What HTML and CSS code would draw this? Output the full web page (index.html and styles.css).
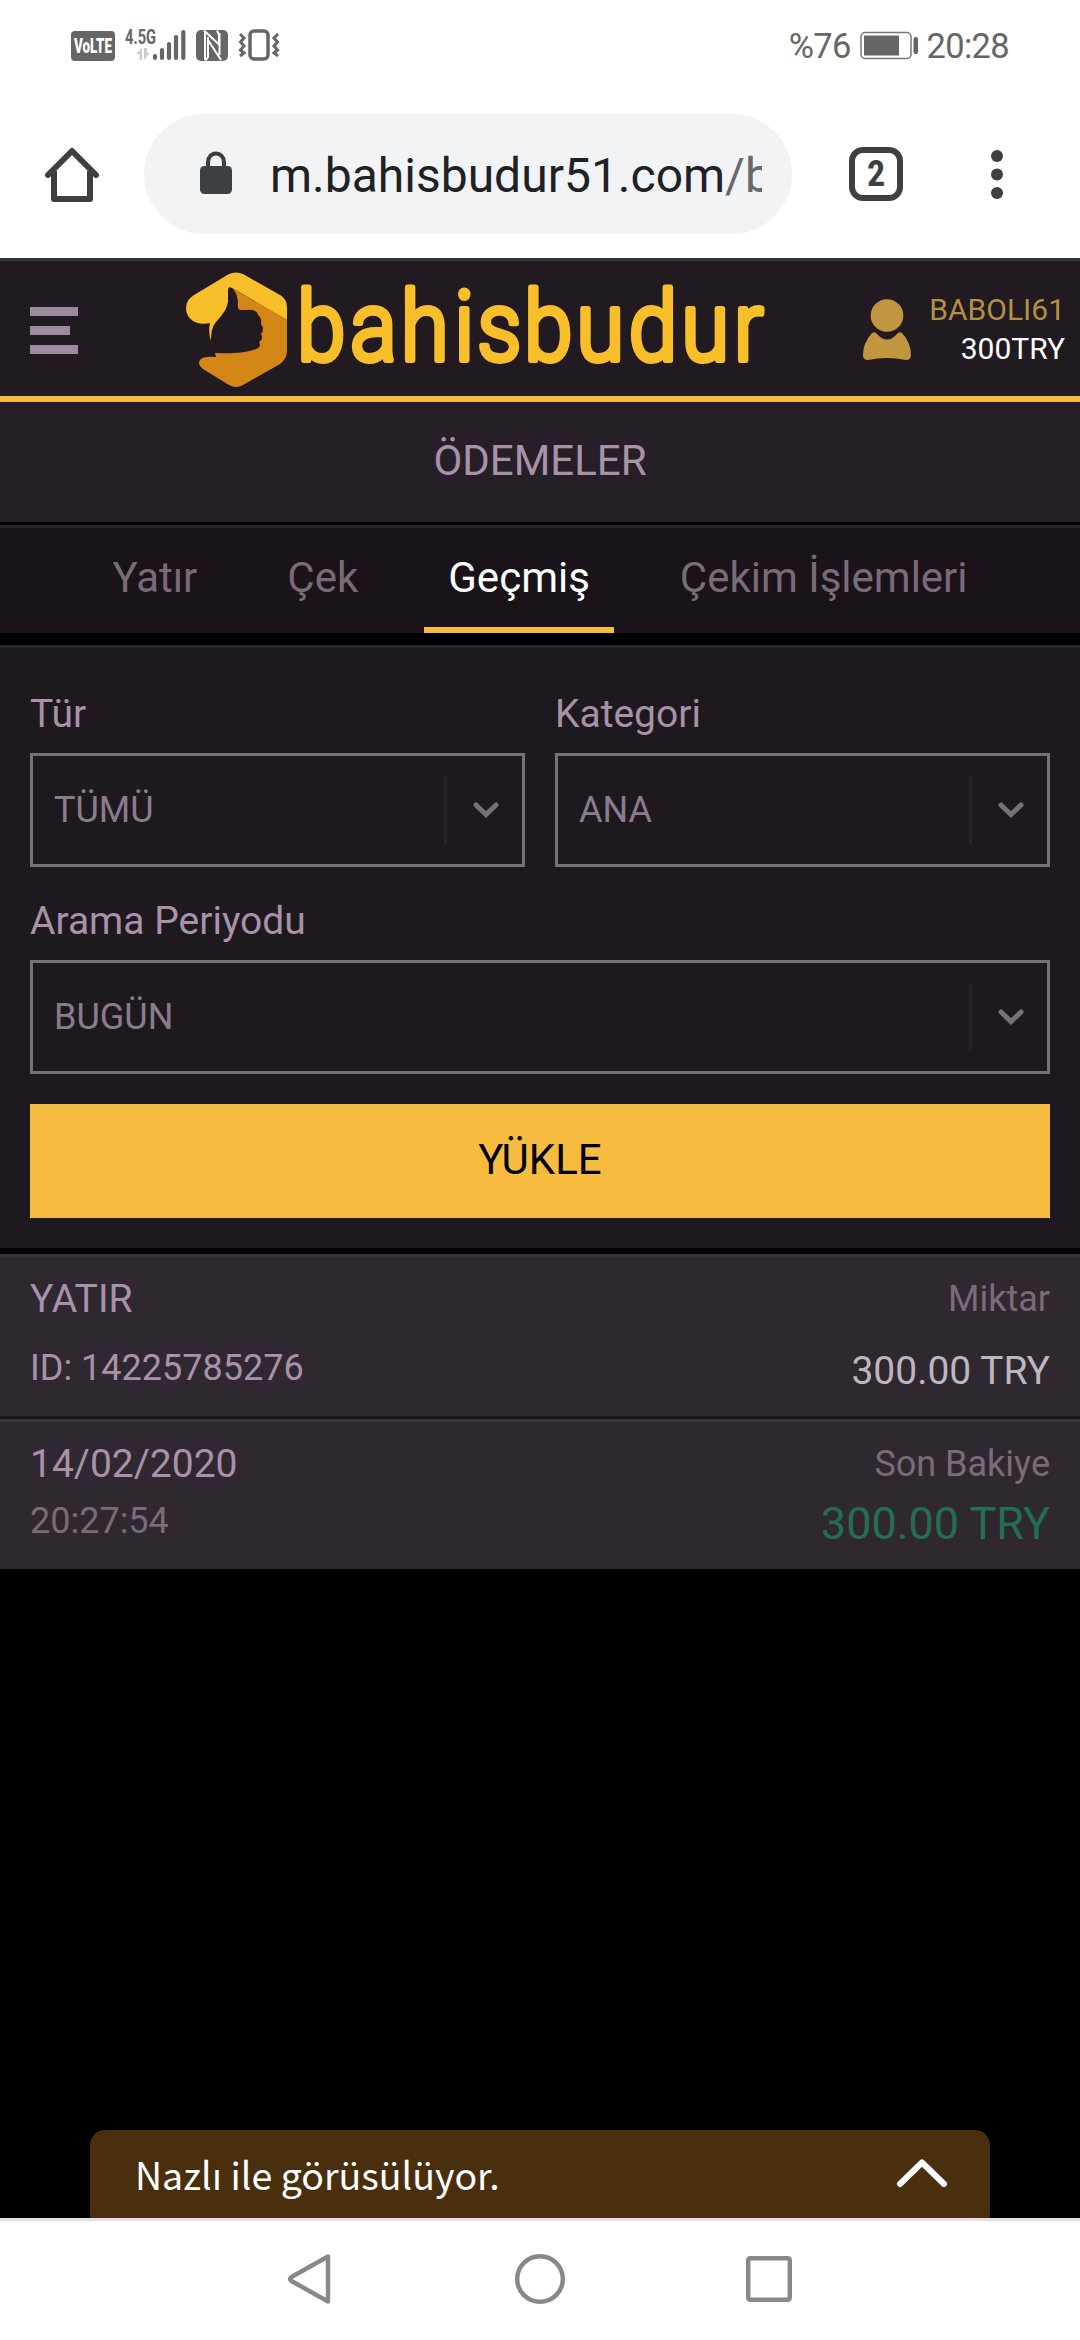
FILE: index.html
```html
<!DOCTYPE html>
<html lang="tr">
<head>
<meta charset="utf-8">
<title>Ödemeler</title>
<link rel="stylesheet" href="styles.css">
</head>
<body>
<div class="status">
  <div class="status-left">
    <svg width="212" height="36" viewBox="0 0 212 36" fill="#666">
      <rect x="0" y="4" width="44" height="30" rx="4"/>
      <text class="volte" x="22" y="26" text-anchor="middle" textLength="38" lengthAdjust="spacingAndGlyphs">VoLTE</text>
      <text class="gen" x="54" y="17" textLength="31" lengthAdjust="spacingAndGlyphs">4.5G</text>
      <path d="M65 27 71 21V33H68.500V27ZM73 21H76V26H79L73 33Z" fill="#ccc"/>
      <path d="M84 29V31M91 23V31M98 17V31M105 10V31M112.300 5V31" stroke="#666" stroke-width="4.200" stroke-linecap="round" fill="none"/>
      <rect x="125" y="3" width="32" height="31" rx="5"/>
      <path d="M133 3.500 148 17.500V8L146 3.500M137 10V30L134.500 33.500M134 4V33M137 13 150 33M148.500 6V28" fill="none" stroke="#fff" stroke-width="2"/>
      <rect x="179" y="4" width="18" height="28" rx="4" fill="none" stroke="#666" stroke-width="3.500"/>
      <path d="M169 7 173 11 169.500 15 173 19 169.500 23 173 26 169 29M207 7 203 11 206.500 15 203 19 206.500 23 203 26 207 29" fill="none" stroke="#666" stroke-width="3"/>
    </svg>
  </div>
  <div class="status-right">
    <span class="pct">%76</span>
    <svg width="59" height="30" viewBox="0 0 59 30">
      <rect x="1" y="1.500" width="50" height="26" rx="4" fill="none" stroke="#777" stroke-width="1.500"/>
      <rect x="4" y="4.500" width="35" height="20" fill="#666"/>
      <rect x="53.500" y="6" width="4.500" height="17" rx="2" fill="#666"/>
    </svg>
    <span class="clock">20:28</span>
  </div>
</div>
<div class="browser">
  <svg class="home" width="54" height="56" viewBox="0 0 54 56" fill="none" stroke="#3c4043" stroke-width="6">
    <path d="M3 28 27 4 51 28" stroke-linecap="round" stroke-linejoin="round"/>
    <path d="M9 24V52H45V24" stroke-linejoin="round"/>
  </svg>
  <div class="pill">
    <svg width="32" height="44" viewBox="0 0 32 44"><rect y="15" width="32" height="28" rx="4.500" fill="#3c4043"/><path d="M8 17V11A8 8.500 0 0 1 24 11V17" fill="none" stroke="#3c4043" stroke-width="4"/></svg>
    <div class="url">m.bahisbudur51.com<span>/b</span></div>
  </div>
  <div class="tabcount">2</div>
  <svg class="dots" width="12" height="50" viewBox="0 0 12 50" fill="#3c4043"><circle cx="6" cy="6" r="6"/><circle cx="6" cy="24.500" r="6"/><circle cx="6" cy="43" r="6"/></svg>
</div>
<header class="site">
  <svg class="menu" width="48" height="48" viewBox="0 0 48 48" fill="#9d8a9e"><path d="M0 0H48V9H0ZM0 19H40V28H0ZM0 38H48V47H0Z"/></svg>
  <svg class="logo" width="582" height="116" viewBox="0 0 582 116">
    <path fill="#d48617" d="M46 16 101 48V79Q101 87 94 92L57 113Q50 117 43 113L17 97Q11 92 14 88Q17 84 30 85L29 81C45 82 60 81 70 77Q76 75 73 70Q78 67 75 62Q79 57 75 52Q76 46 72 43Q71 37 60 38H54Q51 37 52 30Q51 20 46 16Z"/>
    <path fill="#f9bf2a" d="M43 2Q50-1 57 2L94 23Q101 27 101 35V48L48 17Q42 13 42 18V30C40 42 29 49 27 55Q25 60 25 69Q22 60 24 51C10 54 0 47 0 36Q0 28 8 23Z"/>
    <text class="wordmark" transform="scale(.9 1)" x="123.500 182.400 239 298.300 323.800 375.700 434 492.200 550.600 609" y="88.200">bahisbudur</text>
  </svg>
  <svg class="user" width="48" height="62" viewBox="0 0 48 62" fill="#c2963e"><circle cx="24" cy="16.500" r="16.300"/><path d="M9 34Q12 32 14 35Q24 46 34 35Q36 32 39 34Q48 44 48 56Q48 61 43 61Q24 57 5 61Q0 61 0 56Q0 44 9 34Z"/></svg>
  <div class="account"><div class="name">BABOLI61</div><div class="bal">300TRY</div></div>
</header>
<main>
  <h1>ÖDEMELER</h1>
  <nav class="tabs"><a>Yatır</a><a>Çek</a><a class="active">Geçmiş</a><a>Çekim İşlemleri</a></nav>
  <section class="filters">
    <div class="field"><label>Tür</label><div class="select"><span>TÜMÜ</span><i></i><svg width="26" height="16" viewBox="0 0 26 16"><path d="M3 3 13 12.500 23 3"/></svg></div></div>
    <div class="field"><label>Kategori</label><div class="select"><span>ANA</span><i></i><svg width="26" height="16" viewBox="0 0 26 16"><path d="M3 3 13 12.500 23 3"/></svg></div></div>
    <div class="field wide"><label>Arama Periyodu</label><div class="select"><span>BUGÜN</span><i></i><svg width="26" height="16" viewBox="0 0 26 16"><path d="M3 3 13 12.500 23 3"/></svg></div></div>
    <button>YÜKLE</button>
  </section>
  <section class="record">
    <div class="row first">
      <div><p class="title">YATIR</p><p class="ident">ID: 14225785276</p></div>
      <div class="right"><p class="caption">Miktar</p><p class="amount">300.00 TRY</p></div>
    </div>
    <div class="row second">
      <div><p class="title">14/02/2020</p><p class="time">20:27:54</p></div>
      <div class="right"><p class="caption">Son Bakiye</p><p class="balance">300.00 TRY</p></div>
    </div>
  </section>
  <div class="chat"><span>Nazlı ile görüsülüyor.</span><svg width="50" height="30" viewBox="0 0 50 30"><path d="M3 26 25 4.500 47 26"/></svg></div>
</main>
<footer>
  <svg width="46" height="52" viewBox="0 0 46 52"><path d="M40 3.500V48.500L3.500 28Q.5 26 3.500 24Z"/></svg>
  <svg width="50" height="50" viewBox="0 0 50 50"><circle cx="25" cy="25" r="22.800"/></svg>
  <svg width="46" height="46" viewBox="0 0 46 46"><rect x="2.200" y="2.200" width="41.600" height="41.600" rx="2"/></svg>
</footer>
</body>
</html>
```
FILE: styles.css
```css
* { box-sizing: border-box; }
body { margin: 0; width: 1080px; height: 2340px; display: flex; flex-direction: column; overflow: hidden; background: #000; font-family: Roboto, "Noto Sans", sans-serif; }
h1, p { margin: 0; font-weight: 400; }
svg { display: block; flex: none; overflow: visible; }

.status { height: 90px; background: #fff; display: flex; justify-content: space-between; padding: 27px 71px 0; color: #666; }
.volte { font: 900 20px Roboto, sans-serif; fill: #fff; }
.gen { font: 700 20px Roboto, sans-serif; fill: #666; }
.status-right { display: flex; align-items: flex-start; font-size: 34.5px; line-height: 38px; letter-spacing: -.7px; white-space: nowrap; }
.status-right svg { margin: 4px 8px 0 9px; }

.browser { height: 171px; background: #fff; border-bottom: 3px solid #303640; display: flex; align-items: flex-start; padding: 24px 0 0 45px; }
.home { margin-top: 33px; }
.pill { width: 648px; height: 120px; margin-left: 45px; border-radius: 60px; background: #f1f3f5; display: flex; padding: 0 30px 0 56px; }
.pill svg { margin-top: 37px; }
.url { margin-left: 38px; width: 493px; overflow: hidden; white-space: nowrap; font-size: 48px; line-height: 124px; color: #202124; }
.url span { color: #65696e; }
.tabcount { width: 54px; height: 54px; margin: 33px 0 0 57px; border: 6px solid #3c4043; border-radius: 14px; color: #3c4043; text-align: center; font: 700 36px/43px "Roboto Condensed", Roboto, sans-serif; }
.dots { margin: 36px 0 0 88px; }

.site { height: 141px; background: #211a21; border-bottom: 6px solid #f7bb40; display: flex; align-items: flex-start; padding-left: 30px; }
.menu { margin-top: 46px; }
.logo { margin: 11px 0 0 108px; }
.wordmark { font: 300 96px Roboto, sans-serif; fill: #f9bf2a; stroke: #f9bf2a; stroke-width: 6; stroke-linejoin: round; }
.user { margin: 38px 0 0 95px; }
.account { flex: 1; padding: 29px 15px 0 0; text-align: right; color: #fff; font-size: 30px; line-height: 39px; }
.name { color: #b58e47; }

main { flex: 1; display: flex; flex-direction: column; }
h1 { height: 120px; background: #261f27; color: #a792a8; text-align: center; font-size: 42px; line-height: 117px; }
.tabs { height: 108px; margin-top: 3px; background: #1a141a; border-top: 3px solid #2a252b; display: flex; justify-content: center; gap: 42px; font-size: 42px; line-height: 100px; color: #796c78; }
.tabs a { padding: 0 24px; white-space: nowrap; }
.tabs .active { color: #fff; border-bottom: 6px solid #f7bb40; }

.filters { height: 603px; margin-top: 12px; background: #1e191e; border-top: 3px solid #2a252b; padding: 42px 30px 30px; display: grid; grid-template-columns: 1fr 1fr; column-gap: 30px; align-content: start; }
.field label { display: block; height: 63px; font-size: 39px; line-height: 48px; color: #a792a8; }
.field.wide, .filters button { grid-column: span 2; }
.field.wide { margin-top: 30px; }
.select { height: 114px; border: 3px solid #7b6e7b; display: flex; align-items: center; color: #8b7b8d; font-size: 36px; }
.select span { flex: 1; padding-left: 21px; }
.select i { width: 3px; height: 66px; background: #282329; }
.select svg { margin: 0 23px 0 26px; }
.select path { fill: none; stroke: #7b6e7b; stroke-width: 5; stroke-linecap: round; }
.filters button { height: 114px; margin-top: 30px; border: 0; padding: 0 0 2px; background: #f7bb40; color: #000; font: 42px/112px Roboto, sans-serif; }

.record { margin-top: 6px; }
.row { background: #302830; border-top: 3px solid #3b353b; display: flex; justify-content: space-between; padding: 0 30px; color: #a792a8; font-size: 36px; white-space: nowrap; }
.first { height: 162px; }
.second { height: 150px; margin-top: 3px; box-shadow: 0 -3px #1a141a; }
.right { text-align: right; }
.title { padding-top: 18px; font-size: 39px; line-height: 48px; }
.caption { padding-top: 18px; line-height: 48px; color: #796c78; }
.ident { margin-top: 21px; line-height: 48px; }
.amount { margin-top: 24px; font-size: 39px; line-height: 48px; color: #bdb6bd; }
.time { margin-top: 9px; line-height: 48px; color: #796c78; }
.balance { margin-top: 12px; font-size: 45px; line-height: 48px; color: #236d52; }

.chat { width: 900px; height: 88px; margin: auto auto 0; border-radius: 15px 15px 0 0; background: #492f0e; color: #fff; display: flex; align-items: center; justify-content: space-between; padding: 0 43px 2px 45px; font: 37.5px "Noto Sans CJK SC", sans-serif; }
.chat path { fill: none; stroke: #fff; stroke-width: 6; stroke-linecap: round; stroke-linejoin: round; }
footer { height: 122px; background: #fff; border-top: 3px solid #e5e0e5; display: flex; justify-content: center; align-items: center; gap: 181px; padding-bottom: 3px; }
footer svg { fill: none; stroke: #888; stroke-width: 4.4; stroke-linejoin: round; }
```
